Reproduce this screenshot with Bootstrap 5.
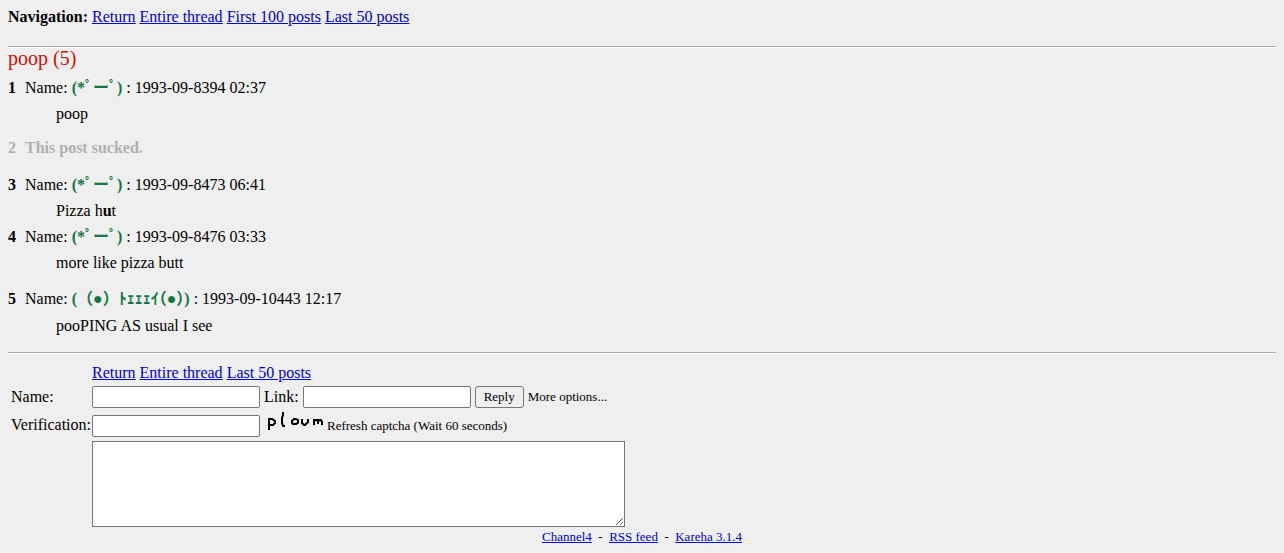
<!DOCTYPE html>
<html lang="en">
<head>
<meta charset="utf-8">
<meta name="viewport" content="width=device-width, initial-scale=1">
<title>poop</title>
<link href="https://cdn.jsdelivr.net/npm/bootstrap@5.3.0/dist/css/bootstrap.min.css" rel="stylesheet">
<style>
body { background: #efefef; color: #000; font-family: "Liberation Serif", "Noto Sans CJK JP", serif; font-size: 16px; line-height: 18px; }
a { color: #0000cc; text-decoration: underline; }
a:hover { color: #cc1105; }
.page { padding: 8px 8px 0; }
.rule { height: 2px; margin: 0; border: 0; border-top: 1px solid #aaa; border-bottom: 1px solid #fff; opacity: 1; }
.thread-title { color: #cc1105; font-size: 20px; line-height: 20px; font-weight: 400; margin: 0 0 7px; }
.post-head, .post-text { line-height: 26px; margin: 0; white-space: nowrap; }
.post-head { display: flex; font-size: 16px; font-weight: 400; }
.post-num { width: 17px; font-weight: 700; }
.post-text { padding-left: 48px; }
.poster { color: #117743; font-weight: 700; font-kerning: none; text-spacing-trim: space-all; }
.half { font-feature-settings: "halt" 1; }
.removed { color: #b0b0b0; font-weight: 700; margin: 8px 0 11px; }
.last-post { padding: 8px 0 13px; }
.last-post .post-head { line-height: 29px; }
.reply-form { display: grid; grid-template-columns: 81px 1fr; padding: 10px 3px 0; }
.field { width: 168px; height: 22px; padding: 1px 2px; border: 1px solid #767676; border-radius: 2px; background: #fff; }
.send { height: 22px; padding: 0 8px; border: 1px solid #767676; border-radius: 3px; background: #efefef; font-size: 13px; line-height: 18px; color: #000; }
.fine { font-size: 13px; line-height: 22px; }
.verify { padding: 3px 0 4px; }
.comment-box { display: block; width: 533px; max-width: 100%; height: 86px; padding: 2px; border: 1px solid #767676; border-radius: 0; background: #fff; resize: both; }
.site-foot { font-size: 13px; line-height: 20px; }
</style>
</head>
<body>
<div class="page">
  <nav class="pb-3 mb-1"><strong>Navigation:</strong> <a href="#">Return</a> <a href="#">Entire thread</a> <a href="#">First 100 posts</a> <a href="#">Last 50 posts</a></nav>
  <hr class="rule">
  <main>
    <h1 class="thread-title">poop (5)</h1>
    <article>
      <h2 class="post-head"><span class="post-num">1</span><span>Name: <span class="poster">(*ﾟーﾟ)</span> : 1993-09-8394 02:37</span></h2>
      <p class="post-text">poop</p>
    </article>
    <article>
      <h2 class="post-head removed"><span class="post-num">2</span><span>This post sucked.</span></h2>
    </article>
    <article>
      <h2 class="post-head"><span class="post-num">3</span><span>Name: <span class="poster">(*ﾟーﾟ)</span> : 1993-09-8473 06:41</span></h2>
      <p class="post-text">Pizza h<b>u</b>t</p>
    </article>
    <article>
      <h2 class="post-head"><span class="post-num">4</span><span>Name: <span class="poster">(*ﾟーﾟ)</span> : 1993-09-8476 03:33</span></h2>
      <p class="post-text">more like pizza butt</p>
    </article>
    <article class="last-post">
      <h2 class="post-head"><span class="post-num">5</span><span>Name: <span class="poster">(（●）ﾄｪｪｪｲ<span class="half">（●）</span>)</span> : 1993-09-10443 12:17</span></h2>
      <p class="post-text">pooPING AS usual I see</p>
    </article>
  </main>
  <hr class="rule">
  <form class="reply-form" onsubmit="return false">
    <span></span>
    <div class="mb-1"><a href="#">Return</a> <a href="#">Entire thread</a> <a href="#">Last 50 posts</a></div>
    <label for="name" class="align-self-center">Name:</label>
    <div class="d-flex align-items-center gap-1">
      <input id="name" class="field" type="text">
      <label for="link">Link:</label>
      <input id="link" class="field" type="text">
      <button class="send" type="submit">Reply</button>
      <span class="fine">More options...</span>
    </div>
    <label for="captcha" class="align-self-center">Verification:</label>
    <div class="verify d-flex align-items-end gap-1">
      <input id="captcha" class="field" type="text">
      <svg width="59" height="26" viewBox="0 0 59 26" fill="none" stroke="#000" stroke-width="2" role="img" aria-label="Captcha"><path d="M5 7v12M5 8h3l3 2v2l-2 2H6M19 1v3l-1 3v5l1 3h2M32 8h-2l-2 2v2l1 1h3l2-1V9l-2-1M38 8v4l2 2h1l3-3V8M50 14V8M50 10l2-1h2v4M54 10l2-1h1l1 2v3"/></svg>
      <span class="fine">Refresh captcha (Wait 60 seconds)</span>
    </div>
    <span></span>
    <textarea class="comment-box" aria-label="Comment"></textarea>
  </form>
  <footer class="site-foot text-center"><a href="#">Channel4</a>&nbsp; -&nbsp; <a href="#">RSS feed</a>&nbsp; -&nbsp; <a href="#">Kareha 3.1.4</a></footer>
</div>
<script src="https://cdn.jsdelivr.net/npm/bootstrap@5.3.0/dist/js/bootstrap.bundle.min.js"></script>
</body>
</html>
